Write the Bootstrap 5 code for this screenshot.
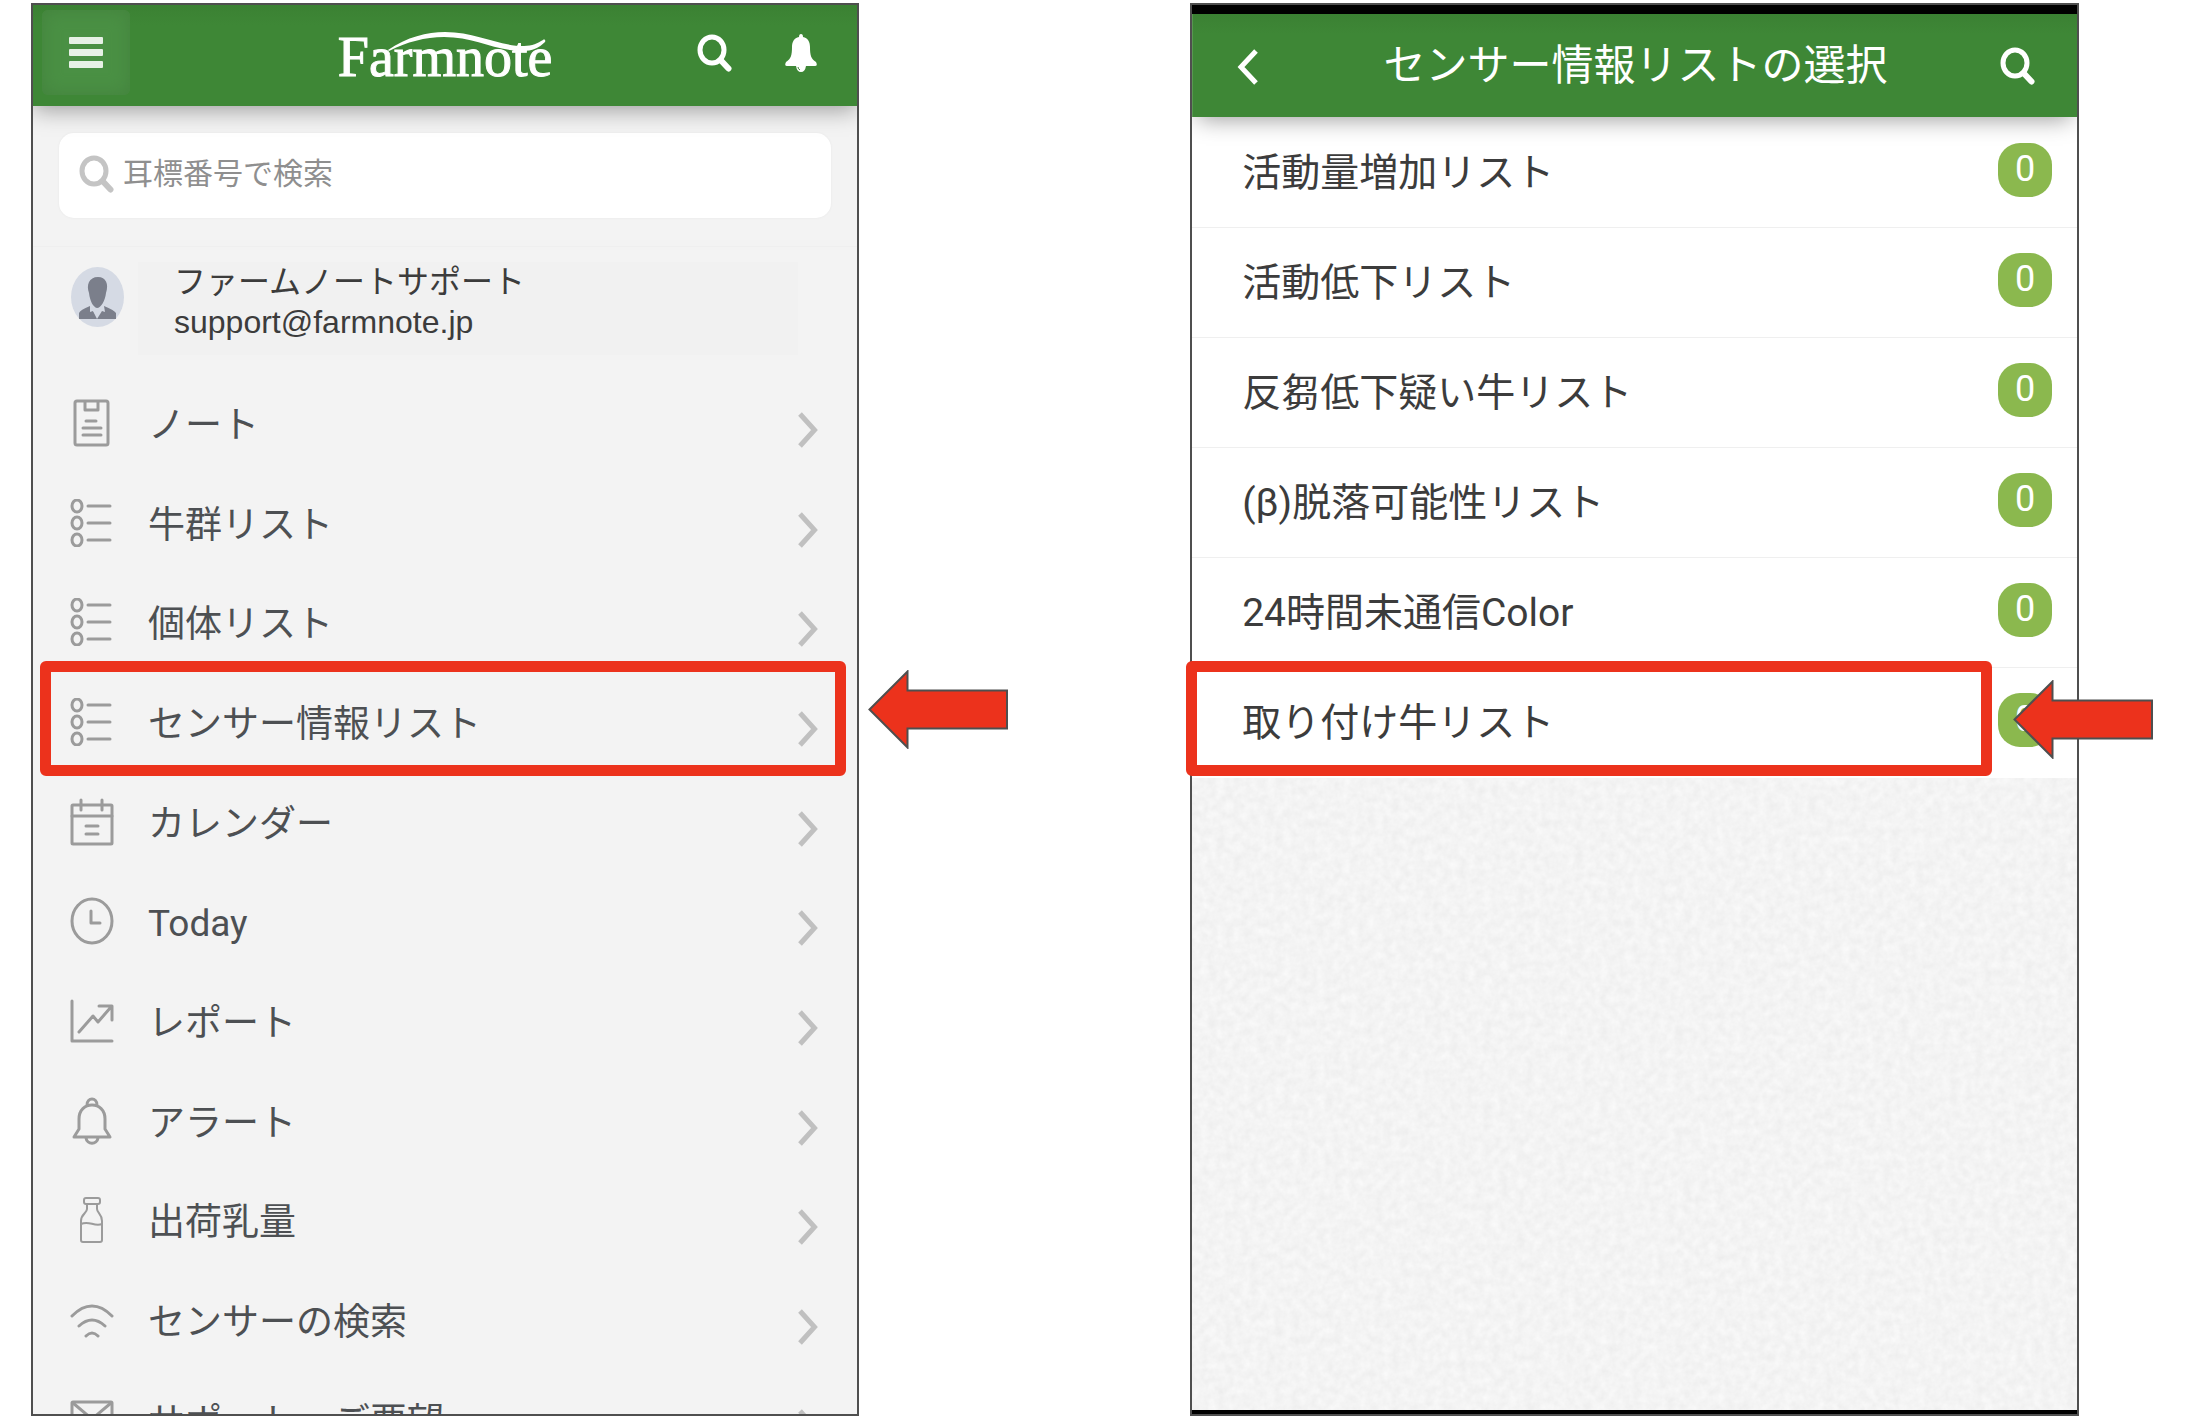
<!DOCTYPE html>
<html lang="ja">
<head>
<meta charset="utf-8">
<meta name="viewport" content="width=device-width, initial-scale=1">
<title>Farmnote</title>
<link href="https://cdn.jsdelivr.net/npm/bootstrap@5.3.0/dist/css/bootstrap.min.css" rel="stylesheet">
<style>
  body { font-family: Roboto, "Noto Sans CJK JP", sans-serif; background: #fff; color: #3c3c3c; }
  a { color: inherit; text-decoration: none; }
  svg { display: block; flex: none; }
  .stage { padding: 3px 107px 8px 31px; gap: 331px; }
  .phone { border: 2px solid #4f4f4f; min-width: 0; }
  .phone-menu { flex: 828 1 0; }
  .phone-list { flex: 889 1 0; }
  .screen { background: #f3f3f3; }

  .topbar { background: linear-gradient(#3b8133, #3e8736 20px); color: #fff; flex: none; z-index: 2; clip-path: inset(0 0 -40px 0); }
  .topbar-menu { height: 101px; padding: 5px 9px 11px; box-shadow: 0 4px 22px rgba(0,0,0,.36); }
  .topbar-list { height: 103px; padding: 0 41px 0 43px; box-shadow: 0 8px 22px -6px rgba(0,0,0,.4); }
  .bar-btn { background: none; border: 0; padding: 0; color: #fff; }
  .bar-tools { gap: 51px; }
  .bar-tools .bar-btn:last-child { margin-right: 30px; }
  .burger { width: 88px; height: 85px; border-radius: 6px; background: #4a9044; box-shadow: inset 0 0 18px #43823d; }
  .brand-word { margin-top: 8px; font: 56px/60px "Liberation Serif", serif; -webkit-text-stroke: 1px #fff; }
  .swoosh { left: 49px; top: 4px; }
  .bar-title { font-size: 42px; line-height: 60px; }

  .find { height: 85px; margin: 27px 26px 0; padding: 0 20px 4px; border-radius: 15px; background: #fff; gap: 8px; box-shadow: 0 0 3px rgba(0,0,0,.05); }
  .find input { border: 0; outline: 0; background: none; font-size: 30px; line-height: 44px; padding: 0; min-width: 0; }
  .find input::placeholder { color: #8f8f8f; opacity: 1; }
  .user { margin-top: 28px; padding: 15px 59px 18px 38px; border-top: 1px solid #efefef; gap: 14px; }
  .user-text { background: #f1f1f1; height: 93px; padding: 0 36px; font: 32px/40px "Liberation Sans", "Noto Sans CJK JP", sans-serif; }
  .avatar { margin-top: 5px; }

  .menu-row { height: 7vh; flex: none; padding: 0 39px 0 37px; gap: 34px; font-size: 37px; line-height: 54px; color: #4d5053; }
  .menu-row .ico { width: 44px; height: 48px; fill: none; stroke: #9b9b9b; stroke-width: 3; stroke-linecap: round; stroke-linejoin: round; }
  .menu-label { padding-top: 6px; }
  .chev { margin-top: 14px; }
  .frame-mark { border: 11px solid #ec321c; border-radius: 6px; height: 115px; z-index: 3; pointer-events: none; }
  .menu-mark { left: 7px; right: 11px; top: -11px; }
  .list-mark { left: -6px; right: 85px; top: -7px; }
  .arrow { width: 141px; height: 79px; fill: #ec321c; stroke: #4f4f4f; stroke-width: 2; z-index: 4; }
  .menu-arrow { left: 100%; top: 665px; margin-left: 11px; }
  .list-arrow { right: -77px; top: 12px; }

  .strip { background: #000; flex: none; }
  .sensors { background: #fff; padding-top: 1px; }
  .sensor { height: 110px; padding: 0 25px 0 50px; border: 0; border-bottom: 2px solid #efefef; background: #fff; font-size: 39px; line-height: 56px; color: #3c3c3c; }
  .sensor:hover { color: #3c3c3c; }
  .count { width: 54px; height: 54px; margin-bottom: 6px; border-radius: 22px; background: #8bb84e; color: #fff; font-size: 36px; line-height: 52px; }
</style>
<script src="https://cdn.jsdelivr.net/npm/bootstrap@5.3.0/dist/js/bootstrap.bundle.min.js"></script>
</head>
<body>
<svg width="0" height="0" class="position-absolute" aria-hidden="true">
  <symbol id="lens" viewBox="0 0 36 38"><ellipse cx="15" cy="16" rx="12" ry="13" fill="none" stroke="currentColor" stroke-width="5"/><path d="M23.500 26L31.500 34.500" stroke="currentColor" stroke-width="6" stroke-linecap="round"/></symbol>
  <symbol id="chevron" viewBox="0 0 20 36"><path d="M2 2L16.500 18L2 34" fill="none" stroke="#c0c0c0" stroke-width="5"/></symbol>
  <symbol id="rows" viewBox="0 0 44 48"><ellipse cx="7" cy="7" rx="5" ry="6"/><ellipse cx="7" cy="24" rx="5" ry="6"/><ellipse cx="7" cy="41" rx="5" ry="6"/><path d="M18 7H40M18 24H40M18 41H40"/></symbol>
  <symbol id="pointer" viewBox="0 0 141 79"><path d="M1.500 39.500L39.500 1.500V20.500H139V58.500H39.500V77.500Z"/></symbol>
</svg>

<main class="stage vh-100 d-flex align-items-stretch">
  <section class="phone phone-menu position-relative">
    <div class="screen h-100 overflow-hidden d-flex flex-column">
      <header class="topbar topbar-menu position-relative d-flex align-items-center">
        <div class="col p-0">
          <button class="bar-btn burger d-flex align-items-center justify-content-center" type="button" aria-label="メニュー">
            <svg width="34" height="32" fill="#e7f1e6"><rect width="34" height="7" rx="1"/><rect y="12" width="34" height="7" rx="1"/><rect y="24" width="34" height="7" rx="1"/></svg>
          </button>
        </div>
        <a href="#" class="position-relative brand-word">Farmnote
          <svg class="swoosh position-absolute" width="160" height="24" fill="#fff"><path d="M1 19C20 6 40 1 58 1C90 1 110 15 137 15C145 15 151 12 156 9C157 8 159 9 158 11C152 17 145 20 136 20C108 20 88 6 57 6C38 6 20 11 2 20Z"/></svg>
        </a>
        <div class="bar-tools col p-0 d-flex justify-content-end align-items-center">
          <button class="bar-btn" type="button" aria-label="検索"><svg width="36" height="38"><use href="#lens"/></svg></button>
          <button class="bar-btn" type="button" aria-label="通知"><svg width="34" height="40" fill="#fff"><path d="M17 1Q19 1 19 4C24 5 26 9 26 14C26 22 27 26 32 29Q34 33 31 33H22Q21 39 17 39T12 33H3Q0 33 2 29C7 26 8 22 8 14C8 9 10 5 15 4Q15 1 17 1Z"/><path d="M14 34Q14 36 16 37" fill="none" stroke="#3e8736" stroke-width="1"/></svg></button>
        </div>
      </header>

      <label class="find d-flex align-items-center flex-shrink-0">
        <svg width="36" height="38" color="#c4c4c4"><use href="#lens"/></svg>
        <input class="flex-fill" type="search" placeholder="耳標番号で検索" aria-label="耳標番号で検索">
      </label>

      <div class="user d-flex flex-shrink-0">
        <svg class="avatar" width="53" height="60" viewBox="0 0 53 60"><ellipse cx="26.500" cy="30" rx="26.500" ry="30" fill="#d5dae4"/><path d="M18 26C15 18 18 10 27 10C35 10 38 17 35 26C34 34 30 41 26 41C22 40 19 34 18 26ZM8 52V46Q9 43 19 39L26 50L33 39Q43 43 45 46V52Z" fill="#7b7f8b"/><path d="M19 39L21 39L26 45L31 39L33 39L34 45L31 44L26 52L22 44L19 45Z" fill="#d5dae4"/></svg>
        <div class="user-text flex-fill"><div>ファームノートサポート</div><div>support@farmnote.jp</div></div>
      </div>

      <nav class="d-flex flex-column flex-shrink-0">
        <a href="#" class="menu-row d-flex align-items-center"><svg class="ico" viewBox="0 0 44 48"><rect x="5" y="2" width="33" height="44" rx="2"/><path d="M15 3V11H28V3M16 22H26M13 29H31M13 36H31" /></svg><span class="menu-label flex-fill">ノート</span><svg class="chev" width="20" height="36"><use href="#chevron"/></svg></a>
        <a href="#" class="menu-row d-flex align-items-center"><svg class="ico"><use href="#rows"/></svg><span class="menu-label flex-fill">牛群リスト</span><svg class="chev" width="20" height="36"><use href="#chevron"/></svg></a>
        <a href="#" class="menu-row d-flex align-items-center"><svg class="ico"><use href="#rows"/></svg><span class="menu-label flex-fill">個体リスト</span><svg class="chev" width="20" height="36"><use href="#chevron"/></svg></a>
        <a href="#" class="menu-row position-relative d-flex align-items-center"><svg class="ico"><use href="#rows"/></svg><span class="menu-label flex-fill">センサー情報リスト</span><svg class="chev" width="20" height="36"><use href="#chevron"/></svg><span class="frame-mark menu-mark position-absolute"></span></a>
        <a href="#" class="menu-row d-flex align-items-center"><svg class="ico" viewBox="0 0 44 48"><rect x="2" y="7" width="40" height="39" rx="1"/><path d="M2 18H42M11 2V12M32 2V12M16 28H28M16 36H28"/></svg><span class="menu-label flex-fill">カレンダー</span><svg class="chev" width="20" height="36"><use href="#chevron"/></svg></a>
        <a href="#" class="menu-row d-flex align-items-center"><svg class="ico" viewBox="0 0 44 48"><ellipse cx="22" cy="24" rx="20" ry="22"/><path d="M21 14V26H30"/></svg><span class="menu-label flex-fill">Today</span><svg class="chev" width="20" height="36"><use href="#chevron"/></svg></a>
        <a href="#" class="menu-row d-flex align-items-center"><svg class="ico" viewBox="0 0 44 48"><path d="M2 4V44H42M9 35L23 19L28 25L41 10M29 9H42V23"/></svg><span class="menu-label flex-fill">レポート</span><svg class="chev" width="20" height="36"><use href="#chevron"/></svg></a>
        <a href="#" class="menu-row d-flex align-items-center"><svg class="ico" viewBox="0 0 44 48"><path d="M4 40L9 32V22C9 13 15 8 22 8S35 13 35 22V32L40 40ZM17 8C17 0 27 0 27 8M16 41C17 48 27 48 28 41"/></svg><span class="menu-label flex-fill">アラート</span><svg class="chev" width="20" height="36"><use href="#chevron"/></svg></a>
        <a href="#" class="menu-row d-flex align-items-center"><svg class="ico" viewBox="0 0 44 48"><rect x="14" y="2" width="16" height="6" rx="2" stroke-width="2"/><path stroke-width="2" d="M17 8V13C17 17 11 18 11 25V44Q11 46 13 46H30Q32 46 32 44V25C32 18 27 17 27 13V8M11 28C19 24 24 31 32 28"/></svg><span class="menu-label flex-fill">出荷乳量</span><svg class="chev" width="20" height="36"><use href="#chevron"/></svg></a>
        <a href="#" class="menu-row d-flex align-items-center"><svg class="ico" viewBox="0 0 44 48"><path d="M2 20Q22 0 42 20M9 30Q22 18 35 30M16 40Q22 34 28 40"/></svg><span class="menu-label flex-fill">センサーの検索</span><svg class="chev" width="20" height="36"><use href="#chevron"/></svg></a>
        <a href="#" class="menu-row d-flex align-items-center"><svg class="ico" viewBox="0 0 44 48"><rect x="2" y="6" width="40" height="34" rx="1"/><path d="M3 7L22 23L41 7"/></svg><span class="menu-label flex-fill">サポート・ご要望</span><svg class="chev" width="20" height="36"><use href="#chevron"/></svg></a>
      </nav>
    </div>
    <svg class="arrow menu-arrow position-absolute"><use href="#pointer"/></svg>
  </section>

  <section class="phone phone-list d-flex flex-column">
    <div class="strip" style="height:9px"></div>
    <header class="topbar topbar-list position-relative d-flex align-items-center">
      <div class="col p-0 d-flex"><button class="bar-btn" type="button" aria-label="戻る"><svg width="24" height="38"><path d="M21 4L6 20L21 36" fill="none" stroke="#fff" stroke-width="5"/></svg></button></div>
      <h1 class="bar-title m-0 fw-normal">センサー情報リストの選択</h1>
      <div class="col p-0 d-flex justify-content-end"><button class="bar-btn" type="button" aria-label="検索"><svg width="36" height="38"><use href="#lens"/></svg></button></div>
    </header>
    <div class="sensors list-group list-group-flush rounded-0">
      <a href="#" class="sensor list-group-item d-flex align-items-center justify-content-between">活動量増加リスト<span class="count text-center">0</span></a>
      <a href="#" class="sensor list-group-item d-flex align-items-center justify-content-between">活動低下リスト<span class="count text-center">0</span></a>
      <a href="#" class="sensor list-group-item d-flex align-items-center justify-content-between">反芻低下疑い牛リスト<span class="count text-center">0</span></a>
      <a href="#" class="sensor list-group-item d-flex align-items-center justify-content-between">(β)脱落可能性リスト<span class="count text-center">0</span></a>
      <a href="#" class="sensor list-group-item d-flex align-items-center justify-content-between">24時間未通信Color<span class="count text-center">0</span></a>
      <a href="#" class="sensor list-group-item d-flex align-items-center justify-content-between">取り付け牛リスト<span class="count text-center">0</span>
        <span class="frame-mark list-mark position-absolute"></span>
        <svg class="arrow list-arrow position-absolute"><use href="#pointer"/></svg>
      </a>
    </div>
    <div class="flex-fill overflow-hidden" style="min-height:0">
      <svg width="100%" height="100%"><filter id="grain" x="0" y="0" width="100%" height="100%" color-interpolation-filters="sRGB"><feTurbulence type="fractalNoise" baseFrequency="0.12" numOctaves="3" seed="4"/><feColorMatrix values="0.06 0 0 0 0.925  0.06 0 0 0 0.925  0.06 0 0 0 0.925  0 0 0 0 1"/></filter><rect width="100%" height="100%" fill="#f4f4f4" filter="url(#grain)"/></svg>
    </div>
    <div class="strip" style="height:4px"></div>
  </section>
</main>
</body>
</html>
